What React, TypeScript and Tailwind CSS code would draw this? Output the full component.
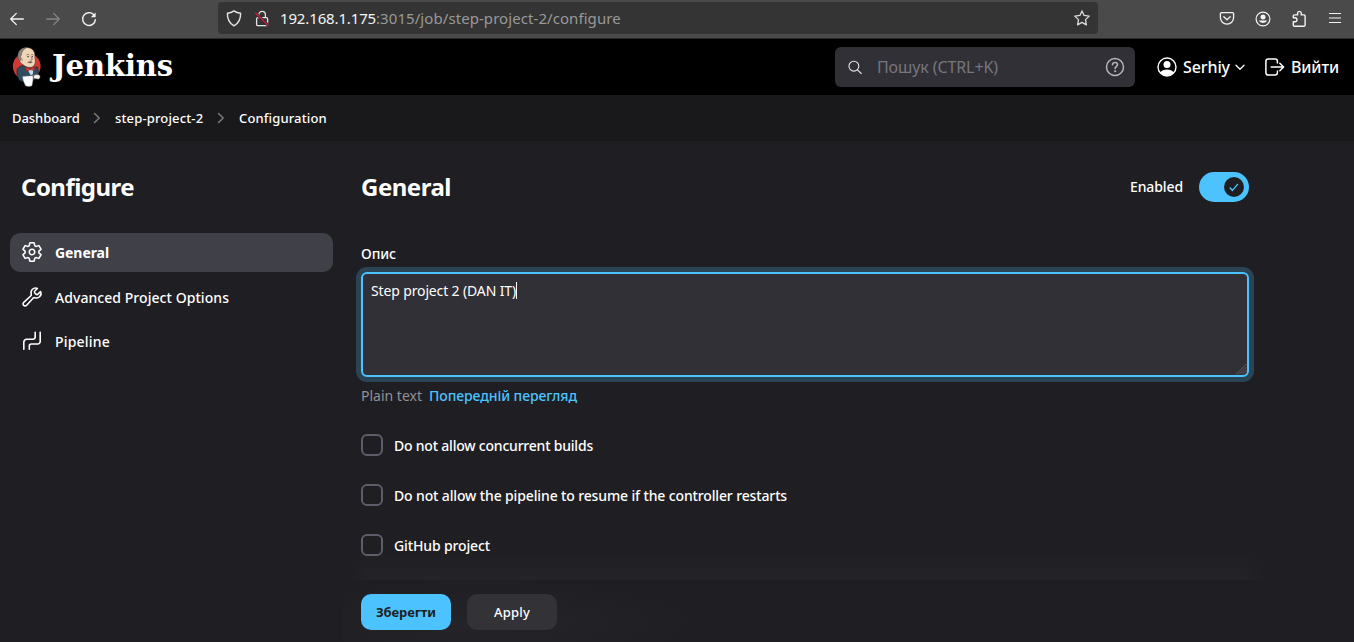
import type { ReactNode } from "react";

function BackIcon() {
  return (
    <svg width="16" height="16" viewBox="0 0 16 16" fill="none" stroke="currentColor" strokeWidth="1.3" strokeLinecap="round" strokeLinejoin="round">
      <path d="M14.3 8H1.7M7.3 2.4 1.7 8l5.6 5.6" />
    </svg>
  );
}

function ForwardIcon() {
  return (
    <svg width="16" height="16" viewBox="0 0 16 16" fill="none" stroke="currentColor" strokeWidth="1.3" strokeLinecap="round" strokeLinejoin="round">
      <path d="M1.7 8h12.6M8.7 2.4 14.3 8l-5.6 5.6" />
    </svg>
  );
}

function ReloadIcon() {
  return (
    <svg width="16" height="16" viewBox="0 0 16 16" fill="none" stroke="currentColor" strokeWidth="1.4" strokeLinecap="round" strokeLinejoin="round">
      <path d="M14.4 8.6A6.4 6.4 0 1 1 12.6 3.6" />
      <path d="M14.6 1.4v4.8H9.8z" fill="currentColor" stroke="none" />
    </svg>
  );
}

function ShieldIcon() {
  return (
    <svg width="16" height="17" viewBox="0 0 16 17" fill="none" stroke="currentColor" strokeWidth="1.4" strokeLinejoin="round">
      <path d="M8 .9c1.9 1.4 4.1 2.1 6.6 2.3.2 4.9-1.7 9.8-6.6 12.7C3.1 13 1.2 8.1 1.4 3.2 3.9 3 6.1 2.3 8 .9z" />
    </svg>
  );
}

function InsecureIcon() {
  return (
    <svg width="16" height="17" viewBox="0 0 16 17" fill="none">
      <rect x="2.6" y="7.7" width="11" height="8" rx="1.2" stroke="#e4e4e4" strokeWidth="1.3" />
      <path d="M4.8 7.5V4.8a3.3 3.5 0 0 1 6.6 0v2.7" stroke="#e4e4e4" strokeWidth="1.3" />
      <path d="M1.3 2.7 14.5 15.6" stroke="#343434" strokeWidth="3" />
      <path d="M1.3 2.7 14.5 15.6" stroke="#e2143f" strokeWidth="1.3" />
    </svg>
  );
}

function StarIcon() {
  return (
    <svg width="16" height="16" viewBox="0 0 16 16" fill="none" stroke="currentColor" strokeWidth="1.3" strokeLinejoin="round">
      <path d="m8 .9 2.1 4.5 5.1.7-3.7 3.5.9 5.3L8 12.4l-4.4 2.5.9-5.3L.8 6.1l5.1-.7z" />
    </svg>
  );
}

function PocketIcon() {
  return (
    <svg width="16" height="16" viewBox="0 0 16 16" fill="none" stroke="currentColor" strokeWidth="1.3" strokeLinecap="round" strokeLinejoin="round">
      <path d="M2.5 1.7h11a1.1 1.1 0 0 1 1.1 1.1v3.8a6.6 6.6 0 0 1-13.2 0V2.8a1.1 1.1 0 0 1 1.1-1.1z" />
      <path d="M4.8 5.8 8 8.8l3.2-3" />
    </svg>
  );
}

function AccountIcon() {
  return (
    <svg width="16" height="16" viewBox="0 0 16 16" fill="none">
      <circle cx="8" cy="8" r="6.9" stroke="currentColor" strokeWidth="1.2" />
      <circle cx="8" cy="6" r="2.5" fill="currentColor" />
      <path d="M3.7 9.5h8.6a4.8 4.3 0 0 1-8.6 0z" fill="currentColor" />
    </svg>
  );
}

function ExtensionIcon() {
  return (
    <svg width="16" height="18" viewBox="0 0 16 18" fill="none" stroke="currentColor" strokeWidth="1.4" strokeLinejoin="round">
      <path d="M2.3 7.800V6.100a1.200 1.200 0 0 1 1.200-1.200h3.100V2.700a1.900 1.900 0 0 1 3.600 0v2.200h2.700a1.200 1.200 0 0 1 1.200 1.200v8.900a1.200 1.200 0 0 1-1.200 1.200H3.500a1.200 1.200 0 0 1-1.200-1.200v-3.300h1.700a1.900 1.900 0 0 0 0-3.900z" />
    </svg>
  );
}

function MenuIcon() {
  return (
    <svg width="12" height="12" viewBox="0 0 12 12" stroke="currentColor" strokeWidth="1.2">
      <path d="M0 .5h12M0 5h12M0 9.500h12" />
    </svg>
  );
}

function Butler() {
  return (
    <svg width="32" height="42" viewBox="0 0 32 42">
      <ellipse cx="15.700" cy="20.300" rx="13.900" ry="13.600" fill="#d33833" />
      <path d="M6 23.500c1.500-2.600 4-4 7.500-3.800l8 2.300 4.700-1.200c1.300 2.600 1.500 5.600.8 8.400l-5 5.800c-4.600 1.300-9.600 1.200-13.600-.7-2-3.400-2.800-7.200-2.400-10.800z" fill="#304d5f" stroke="#172a35" strokeWidth=".7" />
      <path d="M8 13.700C6.300 10 7.300 5.300 10.500 3c3.500-2.300 9-2 11.500 1 2.200 2.600 2 5.500 1.900 8 1 3.500.4 7-2.400 8.900-3 1.200-7.500.3-9.800-2.600C9.700 17.500 8.800 15.700 8 13.700z" fill="#f0d6b7" stroke="#33251f" strokeWidth=".5" />
      <path d="M7.700 13.700C5.900 10.200 7 5.200 10.400 3c1.700-1.100 3.500-1.400 5-1.300C12 3.600 10.300 6.300 10.300 9.300l-.8 1.500.3 3.500c-.8.600-1.600.4-2.100-.6z" fill="#8a8580" stroke="#3e3936" strokeWidth=".4" />
      <path d="M9.300 12.500c1.300-1.300 2.300.5 1.800 2.800" fill="none" stroke="#6b5444" strokeWidth=".6" />
      <path d="M15.500 9c1-.7 2-.7 2.800 0M20.200 9c.8-.6 1.500-.5 2.200.1M20 10.500c.5 1.500 1.600 2.400 1.100 3.300-.5.500-1.200.4-1.800.2" fill="none" stroke="#6b584a" strokeWidth=".8" />
      <path d="M16.300 10.700h1.600M20.800 10.700h1.200" stroke="#241a16" strokeWidth=".9" />
      <path d="M16.200 16.200c1.900-1.200 3.700-1.300 5.500-.3-.9 1.400-3.600 1.900-5.500.3z" fill="#7b6455" />
      <path d="m17 24.200 2.300-.8 2.900.9-.4 4.200-2.300.6z" fill="#c9dbe8" />
      <path d="m14.600 20.800 4.200 1.900 4.300-2.100.4 4-3.900-.9-4.300 1.500z" fill="#d33833" stroke="#81201e" strokeWidth=".4" />
      <path d="m11.600 30.500 10.200-.8c.4 3.300-.1 6.700-.9 10.100-2 .8-4.300.8-6.300-.1-1.600-2.700-2.700-5.900-3-9.200z" fill="#fff" stroke="#999" strokeWidth=".4" />
      <path d="M22.600 29.500c2-1.300 4.600-1.300 6.400.1.400 1.600-.1 3.200-1.600 3.600l-4.800-.7z" fill="#f4efec" stroke="#4a4039" strokeWidth=".5" />
    </svg>
  );
}

function SearchIcon() {
  return (
    <svg width="15" height="15" viewBox="0 0 15 15" fill="none" stroke="currentColor" strokeWidth="1.1" strokeLinecap="round">
      <circle cx="5.900" cy="6.200" r="4.900" />
      <path d="m9.500 9.800 3.700 3.700" />
    </svg>
  );
}

function HelpIcon() {
  return (
    <svg width="20" height="20" viewBox="0 0 20 20" fill="none" stroke="currentColor" strokeLinecap="round" strokeLinejoin="round">
      <circle cx="10" cy="10" r="8.500" strokeWidth="1.500" />
      <path d="M7.500 7.700c.1-1.500 1.200-2.200 2.500-2.200s2.500.8 2.500 2.100c0 1.900-2.400 2-2.400 3.900" strokeWidth="1.600" />
      <circle cx="10.100" cy="14.200" r=".7" fill="currentColor" strokeWidth=".7" />
    </svg>
  );
}

function UserIcon() {
  return (
    <svg width="20" height="20" viewBox="0 0 20 20" fill="none">
      <circle cx="10" cy="10" r="9" stroke="currentColor" strokeWidth="1.4" />
      <circle cx="10" cy="7.600" r="3.500" fill="currentColor" />
      <path d="M3.200 15.700c1.300-2.500 3.900-3.200 6.800-3.200s5.500.7 6.800 3.200A8.700 8.700 0 0 1 10 19a8.700 8.700 0 0 1-6.800-3.300z" fill="currentColor" />
    </svg>
  );
}

function LogoutIcon() {
  return (
    <svg width="20" height="18" viewBox="0 0 20 18" fill="none" stroke="currentColor" strokeWidth="1.500" strokeLinecap="round" strokeLinejoin="round">
      <path d="M12.400 5V3.200A2.200 2.200 0 0 0 10.200 1H3.100A2.200 2.200 0 0 0 .9 3.200v11.600A2.200 2.200 0 0 0 3.100 17h7.100a2.200 2.200 0 0 0 2.200-2.200V13" />
      <path d="M6.200 9h12.200M14.800 5.200 18.600 9l-3.800 3.800" />
    </svg>
  );
}

function GearIcon() {
  return (
    <svg width="22" height="22" viewBox="0 0 512 512" fill="none" stroke="currentColor" strokeWidth="36" strokeLinecap="round" strokeLinejoin="round">
      <path d="M262.290 192.310a64 64 0 1 0 57.400 57.400 64.130 64.130 0 0 0-57.400-57.400zM416.390 256a154.340 154.340 0 0 1-1.530 20.790l45.210 35.460a10.810 10.810 0 0 1 2.450 13.750l-42.770 74a10.810 10.810 0 0 1-13.140 4.590l-44.900-18.080a16.110 16.110 0 0 0-15.170 1.750A164.480 164.480 0 0 1 325 400.800a15.940 15.940 0 0 0-8.820 12.140l-6.730 47.890a11.080 11.080 0 0 1-10.680 9.170h-85.540a11.110 11.110 0 0 1-10.690-8.870l-6.720-47.820a16.070 16.070 0 0 0-9-12.220 155.300 155.300 0 0 1-21.460-12.570 16 16 0 0 0-15.110-1.710l-44.890 18.070a10.810 10.810 0 0 1-13.140-4.580l-42.770-74a10.800 10.800 0 0 1 2.450-13.750l38.210-30a16.050 16.050 0 0 0 6-14.080c-.36-4.170-.58-8.330-.58-12.500s.21-8.270.58-12.350a16 16 0 0 0-6.070-13.940l-38.190-30A10.810 10.810 0 0 1 49.480 186l42.770-74a10.810 10.810 0 0 1 13.140-4.590l44.900 18.080a16.110 16.110 0 0 0 15.170-1.750A164.480 164.480 0 0 1 187 111.200a15.940 15.940 0 0 0 8.820-12.140l6.730-47.890A11.080 11.080 0 0 1 213.230 42h85.540a11.110 11.110 0 0 1 10.690 8.870l6.720 47.820a16.070 16.070 0 0 0 9 12.220 155.300 155.300 0 0 1 21.460 12.570 16 16 0 0 0 15.110 1.710l44.890-18.070a10.810 10.810 0 0 1 13.140 4.580l42.770 74a10.800 10.800 0 0 1-2.450 13.750l-38.210 30a16.050 16.050 0 0 0-6.050 14.080c.33 4.140.55 8.300.55 12.470z" />
    </svg>
  );
}

function WrenchIcon() {
  return (
    <svg width="22" height="22" viewBox="0 0 512 512" fill="none" stroke="currentColor" strokeWidth="36" strokeLinecap="round" strokeLinejoin="round">
      <path d="M393.870 190a32.100 32.100 0 0 1-45.250 0l-26.570-26.570a32.090 32.090 0 0 1 0-45.260L382.190 58a1 1 0 0 0-.3-1.640c-38.820-16.640-89.150-8.160-121.110 23.570-30.580 30.350-32.320 76-21.120 115.840a31.930 31.930 0 0 1-9.060 32.080L64 380a48.170 48.170 0 1 0 68 68l153.860-167a31.930 31.930 0 0 1 31.600-9.130c39.540 10.590 84.540 8.600 114.720-21.190 32.490-32 39.500-88.560 23.750-120.930a1 1 0 0 0-1.600-.26z" />
    </svg>
  );
}

function PipelineIcon() {
  return (
    <svg width="22" height="22" viewBox="0 0 22 22" fill="none" stroke="currentColor" strokeWidth="1.6" strokeLinecap="round" strokeLinejoin="round">
      <path d="M2.800 19.300v-7a3 3 0 0 1 3-3h5.900a2.500 2.500 0 0 0 2.500-2.500V2.200" />
      <path d="M8.300 19.300v-3.300a2 2 0 0 1 2-2h6.400a2.500 2.500 0 0 0 2.500-2.500V2.200" />
    </svg>
  );
}

function Separator() {
  return (
    <svg width="8" height="12" viewBox="0 0 8 12" fill="none" stroke="#7a7a80" strokeWidth="1.5" strokeLinecap="round" strokeLinejoin="round">
      <path d="m1.500 1.500 4.700 4.500-4.700 4.500" />
    </svg>
  );
}

function NavItem({ icon, active = false, children }: { icon: ReactNode; active?: boolean; children: ReactNode }) {
  return (
    <a className={`flex h-[39px] items-center gap-[12px] rounded-[10px] pl-[11px] text-[14px] leading-5 text-white ${active ? "bg-[#404048]" : ""}`}>
      <span className="pb-px">{icon}</span>
      {children}
    </a>
  );
}

function CheckboxRow({ children }: { children: ReactNode }) {
  return (
    <label className="flex h-[22px] items-center gap-[11px] text-[14px] leading-5 font-medium">
      <span className="size-[22px] shrink-0 rounded-[6px] border-2 border-[#5e5d69]" />
      <span className="pt-[2px]">{children}</span>
    </label>
  );
}

export default function App() {
  return (
    <div className="flex h-[642px] w-[1354px] flex-col overflow-hidden bg-[#1f1e22] font-['Noto_Sans',sans-serif] text-white">
      <div className="flex h-[39px] shrink-0 items-start border-b border-[#2b2b2b] bg-[#4a4a4a] text-[#f4f4f4]">
        <div className="flex h-[37px] w-[218px] items-center gap-5 pl-[9px]">
          <BackIcon />
          <span className="text-[#868686]"><ForwardIcon /></span>
          <ReloadIcon />
        </div>
        <div className="mt-[2px] flex h-[32px] w-[880px] items-center rounded-[4px] bg-[#343434] px-[8px]">
          <span className="text-[#e4e4e4]"><ShieldIcon /></span>
          <span className="ml-[12px]"><InsecureIcon /></span>
          <span className="ml-[10px] flex-1 pb-px text-[15px] leading-5">
            <span className="tracking-[-0.143px]">192.168.1.175</span>
            <span className="tracking-[0.070px] text-[#999999]">:3015/job/step-project-2/configure</span>
          </span>
          <span className="text-[#dcdcdc]"><StarIcon /></span>
        </div>
        <div className="flex h-[37px] flex-1 items-center justify-end gap-[20px] pr-[13px]">
          <PocketIcon />
          <AccountIcon />
          <ExtensionIcon />
          <span className="ml-[2px]"><MenuIcon /></span>
        </div>
      </div>

      <header className="flex h-[56px] shrink-0 items-center bg-black pl-[11px] pr-[15px]">
        <Butler />
        <span className="ml-[9px] flex-1 pb-[2px] font-['DejaVu_Serif',serif] text-[29px] leading-8 font-bold tracking-[-0.1px]">Jenkins</span>
        <div className="flex h-[40px] w-[300px] items-center rounded-[6px] bg-[#313036] pl-[13px] pr-[10px]">
          <span className="text-[#e6e6ea]"><SearchIcon /></span>
          <span className="ml-[14px] flex-1 text-[16px] leading-6 tracking-[-0.095px] text-[#77767d]">Пошук (CTRL+K)</span>
          <span className="text-[#b5b4bb]"><HelpIcon /></span>
        </div>
        <a className="ml-[22px] flex items-center text-[16px] leading-6 font-medium">
          <UserIcon />
          <span className="ml-[6px] tracking-[-0.092px]">Serhiy</span>
          <svg className="ml-[5px]" width="10" height="7" viewBox="0 0 10 7" fill="none" stroke="currentColor" strokeWidth="1.3" strokeLinecap="round" strokeLinejoin="round">
            <path d="m1 1.300 4 4 4-4" />
          </svg>
        </a>
        <a className="ml-[20px] flex items-center text-[16px] leading-6 font-medium">
          <LogoutIcon />
          <span className="ml-[6px] tracking-[-0.134px]">Вийти</span>
        </a>
      </header>

      <nav className="flex h-[46px] shrink-0 items-center bg-[#19191b] pl-[12px] text-[13px] leading-5 font-medium">
        <span className="w-[81px] tracking-[-0.050px]">Dashboard</span>
        <span className="w-[22px]"><Separator /></span>
        <span className="w-[102px] tracking-[0.150px]">step-project-2</span>
        <span className="w-[22px]"><Separator /></span>
        <span className="tracking-[0.140px]">Configuration</span>
      </nav>

      <div className="flex min-h-0 flex-1">
        <aside className="w-[343px] shrink-0 px-[10px] pt-[30px]">
          <h1 className="mb-[30px] ml-[11px] text-[24px] leading-8 font-bold tracking-[-0.532px]">Configure</h1>
          <div className="flex flex-col">
            <NavItem icon={<GearIcon />} active><span className="font-bold tracking-[-0.070px]">General</span></NavItem>
            <div className="mt-[6px]">
              <NavItem icon={<WrenchIcon />}><span className="font-medium tracking-[0.058px]">Advanced Project Options</span></NavItem>
            </div>
            <div className="mt-[5px]">
              <NavItem icon={<PipelineIcon />}><span className="font-medium tracking-[0.199px]">Pipeline</span></NavItem>
            </div>
          </div>
        </aside>

        <main className="flex w-[924px] shrink-0 flex-col">
          <div className="flex h-[439px] flex-col bg-[linear-gradient(to_right,#1f1e22_4px,transparent_28px,transparent_900px,#1f1e22_923px),linear-gradient(to_bottom,transparent_408px,#242327_439px)] px-[18px] pt-[30px]">
            <div className="flex h-[32px] items-center">
              <h2 className="flex-1 text-[24px] leading-8 font-bold tracking-[-0.487px]">General</h2>
              <span className="text-[14px] leading-5 font-medium tracking-[-0.109px]">Enabled</span>
              <span className="ml-[16px] flex h-[30px] w-[50px] items-center justify-end rounded-full bg-[#4cc3ff] pr-[5px]">
                <span className="flex size-[20px] items-center justify-center rounded-full bg-[#1f1e22]">
                  <svg width="10" height="9" viewBox="0 0 10 9" fill="none" stroke="#4cc3ff" strokeWidth="1.4" strokeLinecap="round" strokeLinejoin="round">
                    <path d="m1.200 5.100 2.200 2.300 5.200-6" />
                  </svg>
                </span>
              </span>
            </div>
            <div className="mt-[41px] text-[14px] leading-5 font-medium tracking-[-0.084px]">Опис</div>
            <div className="mt-[8px] flex h-[105px] shrink-0 rounded-[6px] border-2 border-[#4cc3ff] bg-[#313036] shadow-[0_0_0_5px_#2a4355]">
              <div className="flex flex-1 items-start pl-[8px] pt-[7px] text-[14px] leading-5 tracking-[-0.136px]">
                Step project 2 (DAN IT)
                <span className="mt-px h-[17px] w-px bg-white" />
              </div>
              <svg className="self-end" width="12" height="12" viewBox="0 0 12 12" stroke="#77767b" strokeWidth=".7">
                <path d="M1 11.500 11.500 1M4 11.500 11.500 4M7 11.500 11.500 7M10 11.500l1.500-1.500" />
              </svg>
            </div>
            <div className="mt-[9px] flex gap-[7px] text-[14px] leading-5">
              <span className="text-[#929197]">Plain text</span>
              <span className="font-medium tracking-[-0.078px] text-[#4cc3ff]">Попередній перегляд</span>
            </div>
            <div className="mt-[28px] flex flex-col gap-[28px]">
              <CheckboxRow><span className="tracking-[-0.209px]">Do not allow concurrent builds</span></CheckboxRow>
              <CheckboxRow><span className="tracking-[-0.135px]">Do not allow the pipeline to resume if the controller restarts</span></CheckboxRow>
              <CheckboxRow><span className="tracking-[-0.130px]">GitHub project</span></CheckboxRow>
            </div>
          </div>
          <div className="flex h-[62px] gap-4 bg-[radial-gradient(ellipse_220px_46px_at_140px_44px,#252429,#1f1e22)] px-[18px] pt-[14px] text-[13px] leading-5">
            <button className="h-[36px] w-[90px] rounded-[10px] bg-[#4cc3ff] font-bold tracking-[-0.095px] text-[#1f1e22]">Зберегти</button>
            <button className="h-[36px] w-[90px] rounded-[10px] bg-[#323237] font-medium tracking-[0.198px]">Apply</button>
          </div>
        </main>
      </div>
    </div>
  );
}
